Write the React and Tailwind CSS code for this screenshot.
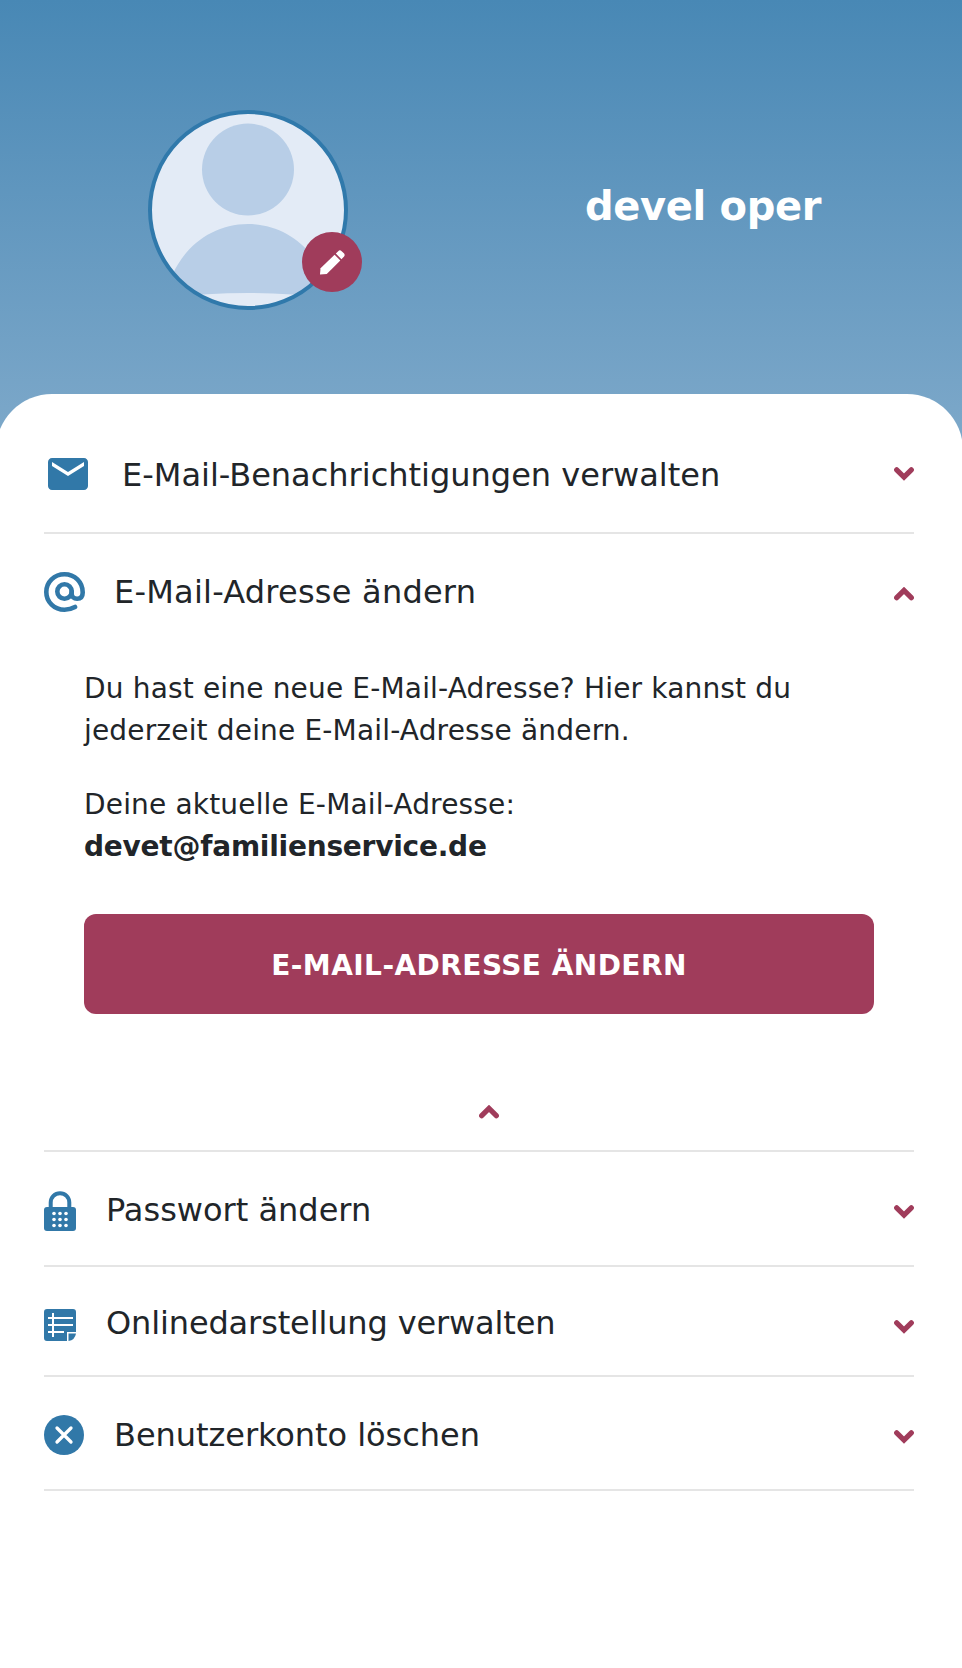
import React from "react";

const FONT = "font-['Verdana','DejaVu_Sans',sans-serif]";

function Chevron({ up = false }) {
  return (
    <svg className="block h-[14px] w-5 shrink-0" viewBox="0 0 20 14" fill="none">
      <path
        d={up ? "M2.7 10.7 10 3.4l7.3 7.3" : "M2.7 2.8 10 10.1l7.3-7.3"}
        stroke="#a03c5b"
        strokeWidth="5.2"
        strokeLinecap="round"
      />
    </svg>
  );
}

function MailIcon() {
  return (
    <svg className="ml-1 h-8 w-10 shrink-0" viewBox="2 4 20 16" fill="#3178a8">
      <path d="M20 4H4c-1.1 0-1.99.9-1.99 2L2 18c0 1.1.9 2 2 2h16c1.1 0 2-.9 2-2V6c0-1.1-.9-2-2-2zm0 4-8 5-8-5V6l8 5 8-5v2z" />
    </svg>
  );
}

function AtIcon() {
  return (
    <svg
      className="h-10 w-[41px] shrink-0"
      viewBox="0 0 41 40"
      fill="none"
      stroke="#3178a8"
      strokeWidth="4.6"
      strokeLinecap="round"
    >
      <circle cx="20.5" cy="19.5" r="7.2" />
      <path d="M27.7 19.5v2.2c0 3 2.100 5 5.400 5s5.600-2 5.600-6.200C38.700 10 30.700 2.300 20.500 2.300S2.300 10 2.300 20s8 17.700 18.200 17.700c4 0 7.300-.9 10.500-2.700" />
    </svg>
  );
}

function LockIcon() {
  const dots = [10, 16, 22];
  return (
    <svg className="mt-[5px] h-10 w-8 shrink-0" viewBox="0 0 32 40">
      <path d="M6.700 18v-6.500a9.300 9.300 0 0 1 18.600 0V18" fill="none" stroke="#3178a8" strokeWidth="4" />
      <rect y="16" width="32" height="24" rx="3" fill="#3178a8" />
      {dots.map((x) => dots.map((y) => <circle key={`${x}-${y}`} cx={x} cy={y + 12.500} r="1.800" fill="#fff" />))}
    </svg>
  );
}

function ListIcon() {
  return (
    <svg className="mt-2 h-8 w-8 shrink-0" viewBox="0 0 32 32">
      <path d="M3 0h26a3 3 0 0 1 3 3v20h-9v9H3a3 3 0 0 1-3-3V3a3 3 0 0 1 3-3z" fill="#3178a8" />
      <path d="M9 4v24M4 9h25M4 16h25M4 23h16" stroke="#fff" strokeWidth="2" />
      <path d="M24.500 32v-7.500H32a9 9 0 0 1-7.500 7.500z" fill="#3178a8" />
    </svg>
  );
}

function CloseIcon() {
  return (
    <svg className="mt-1 h-10 w-10 shrink-0" viewBox="0 0 40 40">
      <circle cx="20" cy="20" r="20" fill="#3178a8" />
      <path d="m13 13 14 14m0-14L13 27" stroke="#fff" strokeWidth="3.300" strokeLinecap="round" />
    </svg>
  );
}

export default function App() {
  return (
    <div className={`min-h-[1668px] w-[962px] overflow-hidden bg-white text-[#212529] ${FONT}`}>
      <header className="flex h-[450px] bg-linear-to-b from-[#4888b5] to-[#7ea9ca]">
        <div className="relative mt-[110px] ml-[148px] size-[200px]">
          <svg className="size-[200px]" viewBox="0 0 200 200">
            <defs>
              <clipPath id="avatar">
                <circle cx="100" cy="100" r="97" />
              </clipPath>
            </defs>
            <circle cx="100" cy="100" r="98" fill="#e3ebf6" />
            <g clipPath="url(#avatar)" fill="#b8cee7">
              <circle cx="100" cy="59.500" r="46" />
              <path d="M18 188C24 146 58 114 100 114s76 32 82 74q-82-10-164 0z" />
            </g>
            <circle cx="100" cy="100" r="98" fill="none" stroke="#3079ab" strokeWidth="4" />
          </svg>
          <button className="absolute top-[122px] left-[154px] flex size-[60px] items-center justify-center rounded-full bg-[#a03c5b]">
            <svg className="size-[25px]" viewBox="0 0 24 24" fill="#fff">
              <path d="M.5 17.500 14 4.500l5.500 5.500L6.500 23 0 23.500z" />
              <path d="m15.200 3.400 2.300-2.300q1.500-1.500 3.300 0l2.100 2.100q1.500 1.500 0 3.300l-2.300 2.300z" />
            </svg>
          </button>
        </div>
        <h1 className="mt-[181px] ml-[237px] text-[40px] leading-[50px] font-bold tracking-[-0.35px] whitespace-nowrap text-white">devel oper</h1>
      </header>
      <main className="relative -mt-14 -ml-1 w-[967px] rounded-t-[56px] bg-white pr-[49px] pl-12">
        <section className="flex h-[140px] items-center border-b-2 border-[#e5e5e5] pt-[22px]">
          <MailIcon />
          <h2 className="mt-px ml-[34px] text-[32px] leading-10 whitespace-nowrap">E-Mail-Benachrichtigungen verwalten</h2>
          <div className="ml-auto"><Chevron /></div>
        </section>
        <section className="h-[618px] border-b-2 border-[#e5e5e5]">
          <div className="flex h-[116px] items-center">
            <AtIcon />
            <h2 className="-mt-px ml-[29px] text-[32px] leading-10 tracking-[0.23px] whitespace-nowrap">E-Mail-Adresse ändern</h2>
            <div className="mt-1 ml-auto"><Chevron up /></div>
          </div>
          <div className="mt-[18px] px-10 text-[28px] leading-[42px] tracking-[0.17px]">
            <p className="whitespace-nowrap">Du hast eine neue E-Mail-Adresse? Hier kannst du<br />jederzeit deine E-Mail-Adresse ändern.</p>
            <p className="mt-8 whitespace-nowrap">Deine aktuelle E-Mail-Adresse:<br /><strong className="tracking-[-0.23px]">devet@familienservice.de</strong></p>
            <button className="mt-[46px] block h-[100px] w-[790px] rounded-xl bg-[#a03c5b] pt-[3px] text-[28px] font-bold tracking-[0.45px] text-white">E-MAIL-ADRESSE ÄNDERN</button>
          </div>
          <div className="mt-[91px] ml-[435px]"><Chevron up /></div>
        </section>
        <section className="flex h-[115px] items-center border-b-2 border-[#e5e5e5]">
          <LockIcon />
          <h2 className="mt-[3px] ml-[30px] text-[32px] leading-10 whitespace-nowrap">Passwort ändern</h2>
          <div className="mt-[7px] ml-auto"><Chevron /></div>
        </section>
        <section className="flex h-[110px] items-center border-b-2 border-[#e5e5e5]">
          <ListIcon />
          <h2 className="mt-[4px] ml-[30px] text-[32px] leading-10 tracking-[-0.13px] whitespace-nowrap">Onlinedarstellung verwalten</h2>
          <div className="mt-[12px] ml-auto"><Chevron /></div>
        </section>
        <section className="flex h-[114px] items-center border-b-2 border-[#e5e5e5]">
          <CloseIcon />
          <h2 className="mt-[4px] ml-[30px] text-[32px] leading-10 tracking-[-0.05px] whitespace-nowrap">Benutzerkonto löschen</h2>
          <div className="mt-[8px] ml-auto"><Chevron /></div>
        </section>
      </main>
    </div>
  );
}
